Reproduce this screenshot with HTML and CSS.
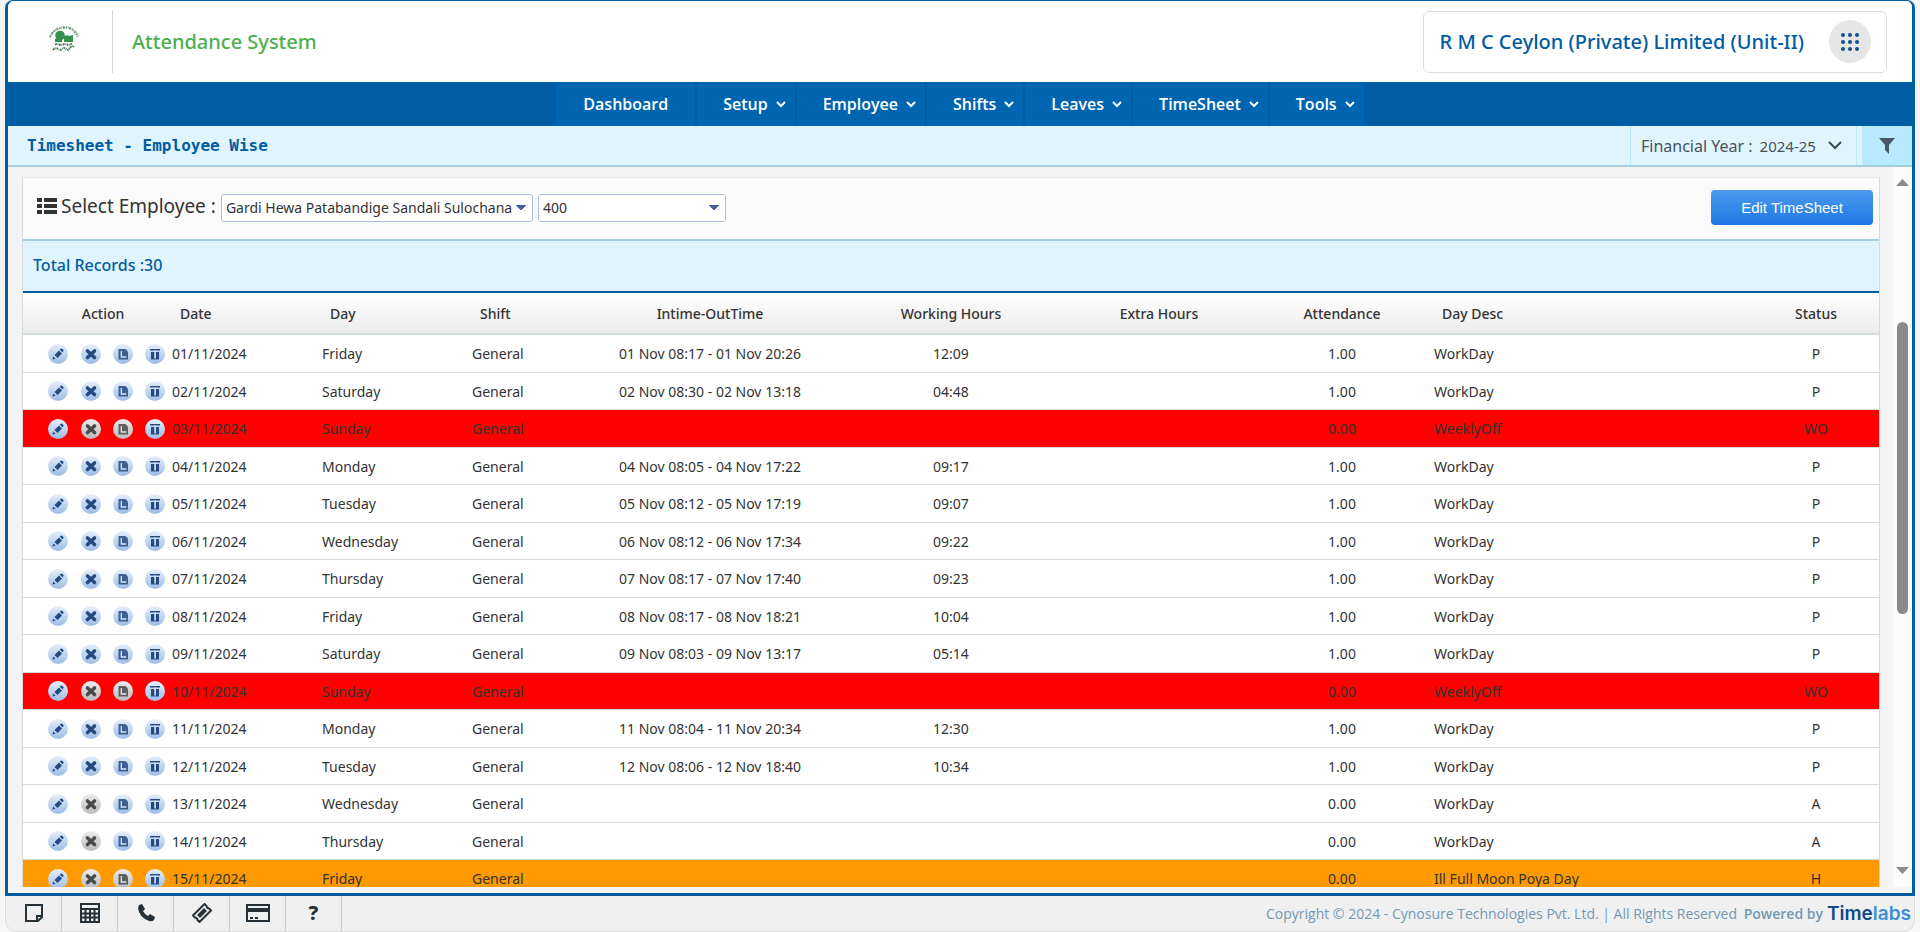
FILE: index.html
```html
<!DOCTYPE html>
<html lang="en">
<head>
<meta charset="utf-8">
<title>Timesheet - Employee Wise</title>
<link rel="stylesheet" href="styles.css">
</head>
<body>
<svg class="defs" aria-hidden="true">
  <defs>
    <linearGradient id="blue" x1="0" y1="0" x2="0" y2="1"><stop offset="0" stop-color="#e6effa"/><stop offset="1" stop-color="#9dbce6"/></linearGradient>
    <linearGradient id="gray" x1="0" y1="0" x2="0" y2="1"><stop offset="0" stop-color="#ececec"/><stop offset="1" stop-color="#bababa"/></linearGradient>
    <g id="pencil"><path d="M4.500 15.500l.8-3 2.200 2.200zM6.500 11l4.500-4.500 3 3-4.500 4.500zM11.800 5.700l1-1q.8-.6 1.600.2l.8.8q.8.8.2 1.600l-1 1z"/></g>
    <g id="cross"><path d="M6.500 7l7 6.500M13.500 7l-7 6.500" fill="none" stroke="currentColor" stroke-width="3.600" stroke-linecap="round"/></g>
    <g id="log"><path d="M5.500 5h6q3.500.5 3.500 4.500V15.500H5.500z" opacity=".85"/><path d="M8.300 7v6h5" fill="none" stroke="#dbe7f7" stroke-width="1.300"/></g>
    <g id="trash"><path d="M5 5h10v1.500H5zM6 8h8v7.500H6z"/><path d="M9.300 6.500h1.600v8H9.300z" fill="#dbe7f7"/></g>
  </defs>
</svg>
<div class="frame">
  <header class="top">
    <svg class="logo" viewBox="0 0 32 30" role="img" aria-label="Company logo">
      <path d="M2 14Q6 5 16 4.500T30 14" fill="none" stroke="#6c957a" stroke-width="2.400" stroke-dasharray="1.500 .8 .7 .6 2 .9"/>
      <circle cx="12" cy="12.500" r="4.800" fill="#34914a"/><path d="M7 16l7-1v4H7zM16 13l3-.8 2 .8 4-1v7h-9z" fill="#34914a"/>
      <path d="M7 21.500q2-1 4 0t4 0 4 0 5-1M5 27q3-3 5-1t4 0 4 0 4-1 4-1" fill="none" stroke="#4b7a59" stroke-width="2" stroke-dasharray="1.800 .7 .8 .6"/>
    </svg>
    <h1 class="app-name">Attendance System</h1>
    <div class="company">
      <span>R M C Ceylon (Private) Limited (Unit-II)</span>
      <button class="apps" aria-label="Applications"><svg viewBox="0 0 18 18"><g fill="#124f93"><circle cx="2" cy="2" r="2"/><circle cx="9" cy="2" r="2"/><circle cx="16" cy="2" r="2"/><circle cx="2" cy="9" r="2"/><circle cx="9" cy="9" r="2"/><circle cx="16" cy="9" r="2"/><circle cx="2" cy="16" r="2"/><circle cx="9" cy="16" r="2"/><circle cx="16" cy="16" r="2"/></g></svg></button>
    </div>
  </header>
  <nav class="nav" id="nav"></nav>
  <div class="subbar">
    <h2 class="page-name">Timesheet - Employee Wise</h2>
    <label class="year">Financial Year :
      <select class="year-select"><option>2024-25</option></select>
      <svg class="year-chevron" viewBox="0 0 14 9"><path d="M1 1l6 6 6-6"/></svg>
    </label>
    <button class="filter" aria-label="Filter"><svg viewBox="0 0 16 16"><path d="M0 0h16l-6 7v9l-4-4V7z"/></svg></button>
  </div>
  <div class="viewport">
    <main class="card">
      <form class="picker">
        <svg class="list" viewBox="0 0 20 16"><path d="M0 0h5v4H0zM7 0h13v4H7zM0 6h5v4H0zM7 6h13v4H7zM0 12h5v4H0zM7 12h13v4H7z"/></svg>
        <label class="picker-label" for="employee">Select Employee :</label>
        <select class="combo combo-wide" id="employee"><option>Gardi Hewa Patabandige Sandali Sulochana</option></select>
        <select class="combo" aria-label="Code"><option>400</option></select>
        <button type="button" class="edit">Edit TimeSheet</button>
      </form>
      <p class="total">Total Records :30</p>
      <table class="sheet">
        <colgroup><col class="c-action"><col class="c-date"><col class="c-date"><col class="c-shift"><col class="c-time"><col class="c-work"><col class="c-extra"><col class="c-att"><col class="c-desc"><col class="c-status"></colgroup>
        <thead><tr><th class="mid action">Action</th><th>Date</th><th>Day</th><th>Shift</th><th class="mid">Intime-OutTime</th><th class="mid">Working Hours</th><th class="mid">Extra Hours</th><th class="mid">Attendance</th><th>Day Desc</th><th class="mid">Status</th></tr></thead>
        <tbody id="rows"></tbody>
      </table>
    </main>
    <div class="scrollbar" aria-hidden="true">
      <svg class="arrow" viewBox="0 0 13 7"><path d="M0 7l6.500-7L13 7z"/></svg>
      <div class="track"><div class="thumb"></div></div>
      <svg class="arrow" viewBox="0 0 13 7"><path d="M0 0l6.500 7L13 0z"/></svg>
    </div>
  </div>
</div>
<footer class="footer">
  <button class="tool" aria-label="Notes"><svg viewBox="0 0 20 20"><path d="M2 2h16v12l-4 4H2zM18 13h-5v5" class="line"/></svg></button>
  <button class="tool" aria-label="Calculator"><svg viewBox="0 0 20 20"><path d="M1 1h18v18H1zM1 6h18M1 10.500h18M1 14.500h18M5.500 6v13M10 6v13M14.500 6v13" class="line"/></svg></button>
  <button class="tool" aria-label="Phone"><svg viewBox="0 0 20 20"><path d="M3 2l3-1 3 5-2 2q2 4 5 5l2-2 5 3-1 3q-2 2-5 1Q3 14 2 5z"/></svg></button>
  <button class="tool" aria-label="Tickets"><svg viewBox="0 0 20 20"><path d="M12.500 1l2 2q0 2 2.500 2.500l2 2L7.500 19l-2-2q0-2-2.500-2.500l-2-2z" class="line"/><path d="M12 5l3 3-7 7-3-3z"/></svg></button>
  <button class="tool" aria-label="Billing"><svg viewBox="0 0 24 20"><path d="M1 2h22v16H1zM4 15h3M9 15h3" class="line"/><path d="M1 5h22v4H1z"/></svg></button>
  <button class="tool help" aria-label="Help">?</button>
  <p class="copy">Copyright © 2024 - Cynosure Technologies Pvt. Ltd. | All Rights Reserved <b>Powered by</b></p>
  <a class="brand" href="#">Time<span>labs</span></a>
</footer>
<script src="app.js"></script>
</body>
</html>
```
FILE: styles.css
```css
* { box-sizing: border-box; }
body {
  margin: 0;
  height: 100vh;
  padding: 0 5px;
  display: flex;
  flex-direction: column;
  overflow: hidden;
  background: #f6f6f6;
  color: #333;
  font: 14px "Noto Sans", "Open Sans", sans-serif;
}
h1, h2, p { margin: 0; }
button { font: inherit; border: 0; padding: 0; background: none; cursor: pointer; }
select { font: inherit; color: inherit; appearance: none; }
svg { display: block; }
.defs { position: absolute; width: 0; height: 0; }
.frame {
  flex: 1;
  min-height: 0;
  display: flex;
  flex-direction: column;
  border: 3px solid #005ca3;
  border-top-width: 1px;
  border-radius: 8px 8px 0 0;
  overflow: hidden;
}

.top { height: 81px; flex: none; display: flex; align-items: center; padding: 0 25px 0 40px; background: #fff; }
.logo { width: 32px; height: 30px; margin-bottom: 8px; }
.app-name {
  flex: 1;
  height: 63px;
  margin-left: 32px;
  padding-left: 19px;
  border-left: 1px solid #d5d8da;
  font-size: 20px;
  font-weight: 500;
  line-height: 63px;
  color: #4caf50;
}
.company {
  display: flex;
  align-items: center;
  gap: 25px;
  height: 62px;
  padding: 0 15px 0 16px;
  border: 1px solid #d9dcde;
  border-radius: 6px;
  font-size: 20px;
  font-weight: 500;
  color: #005ca3;
}
.apps { width: 42px; height: 43px; border-radius: 50%; background: #e6e6e6; display: grid; place-items: center; }
.apps svg { width: 18px; height: 18px; }

.nav { height: 44px; flex: none; display: flex; justify-content: center; background: #005ca3; }
.nav a {
  display: flex;
  align-items: center;
  gap: 8px;
  padding: 0 9px 0 26px;
  border-right: 2px solid #005ca3;
  background: #0065b0;
  color: #fff;
  font: 600 16px/20px "Open Sans", sans-serif;
  text-decoration: none;
}
.nav a:last-child { border-right: 0; }
.nav .plain { padding: 0 27px; }
.nav svg { width: 10px; height: 8px; fill: none; stroke: #fff; stroke-width: 2; }

.subbar { height: 41px; flex: none; display: flex; align-items: stretch; background: #e0f4fe; border-bottom: 2px solid #a5cde0; }
.page-name { flex: 1; padding-left: 19px; font: bold 16px/39px "DejaVu Sans Mono", monospace; color: #005ca3; }
.year {
  display: flex;
  align-items: center;
  width: 227px;
  margin-right: 5px;
  padding: 0 14px 0 10px;
  border: 1px solid #b9e9ff;
  border-width: 0 1px;
  font-size: 16px;
  color: #47535b;
}
.year-select { flex: 1; border: 0; padding: 0 0 0 7px; background: none; font-size: 15px; }
.year-chevron { width: 14px; height: 9px; fill: none; stroke: #3b4a54; stroke-width: 2; }
.filter { width: 50px; background: #b9e9ff; display: grid; place-items: center; }
.filter svg { width: 16px; height: 16px; fill: #455a64; }

.viewport { flex: 1; min-height: 0; margin-bottom: 6px; display: flex; overflow: hidden; background: #f3f3f3; }
.card { flex: 1; align-self: flex-start; margin: 10px 13px 0 14px; border: 1px solid #d2dbe0; border-top: 1px solid #e6e9ea; background: #fff; }
.picker { display: flex; align-items: center; height: 63px; padding: 0 6px 2px 14px; background: #fafafa; border-bottom: 2px solid #a5cde0; }
.list { width: 20px; height: 16px; margin: 0 4px 4px 0; fill: #333; }
.picker-label { margin: 0 5px 4px 0; font-size: 19px; }
.combo {
  width: 188px;
  height: 28px;
  margin-right: 5px;
  padding: 0 20px 0 4px;
  border: 1px solid #a8bfe3;
  border-radius: 3px;
  background: linear-gradient(to bottom left, #4b5ea5 50%, transparent 50%) no-repeat right 11px center / 5px 6px, linear-gradient(to bottom right, #4b5ea5 50%, transparent 50%) no-repeat right 6px center / 5px 6px, #fff;
}
.combo-wide { width: 312px; }
.edit { width: 162px; height: 35px; margin-left: auto; border-radius: 4px; background: linear-gradient(#4a9aec, #1f78e6); color: #fff; font: 15px "Liberation Sans", sans-serif; }
.total { height: 52px; padding-left: 10px; border-bottom: 2px solid #005ca3; background: #e0f4fe; font-size: 16px; font-weight: 500; line-height: 48px; color: #005ca3; }

.sheet { width: 100%; table-layout: fixed; border-collapse: separate; border-spacing: 0; }
.c-action { width: 144px; }
.c-date { width: 150px; }
.c-shift { width: 114px; }
.c-time { width: 258px; }
.c-work { width: 224px; }
.c-extra { width: 192px; }
.c-att { width: 174px; }
.c-desc { width: 324px; }
.c-status { width: 126px; }
.sheet th, .sheet td { padding: 0 0 0 5px; text-align: left; border-bottom: 1px solid #d5dadc; white-space: nowrap; }
.sheet th { height: 42px; padding-left: 13px; border-bottom: 2px solid #d3dbdd; font-weight: 500; color: #333; background: linear-gradient(#fff, #ececec); }
.sheet .mid { padding: 0; text-align: center; }
.sheet .action { padding-left: 16px; }
.sheet tbody tr { height: 37px; }
.sheet tbody tr:nth-child(odd) { height: 38px; }
.off { background: #f00; }
.holiday { background: #f90; }
.actions { display: flex; gap: 12px; padding-left: 20px; }
.actions button { width: 20px; height: 20px; color: #244a82; }
.actions button:first-child { margin-right: 1px; }
.actions button.disabled { color: #4a4a4a; }
.actions svg { width: 20px; height: 20px; fill: currentColor; }

.scrollbar { width: 19px; padding: 12px 0 13px; display: flex; flex-direction: column; align-items: center; background: #fcfcfc; }
.arrow { width: 13px; height: 7px; fill: #8b8b8b; }
.track { flex: 1; padding-top: 136px; }
.thumb { width: 11px; height: 292px; border-radius: 6px; background: #8b8b8b; }

.footer { height: 36px; flex: none; display: flex; align-items: center; padding-right: 3px; background: #f0f0f0; border: 1px solid #ddd; border-top: 0; border-radius: 0 0 12px 12px; color: #7398b3; }
.tool { width: 56px; height: 35px; padding-bottom: 2px; display: grid; place-items: center; border-right: 1px solid #c0c8ca; color: #263238; }
.tool svg { width: 20px; height: 20px; fill: currentColor; }
.tool svg[viewBox="0 0 24 20"] { width: 24px; }
.tool .line { fill: none; stroke: currentColor; stroke-width: 2; }
.help { font-size: 20px; font-weight: 800; }
.copy { margin-left: auto; font-family: "Open Sans", sans-serif; }
.copy b { margin-left: 3px; font-weight: 600; }
.brand { margin-left: 4px; font: 600 19px Inter, sans-serif; color: #0f4c8c; text-decoration: none; }
.brand span { color: #3a8fd6; }
```
FILE: app.js
```js
document.getElementById('nav').innerHTML = ['Dashboard', 'Setup', 'Employee', 'Shifts', 'Leaves', 'TimeSheet', 'Tools']
  .map((name, i) => i === 0
    ? `<a class="plain" href="#">${name}</a>`
    : `<a href="#">${name}<svg viewBox="0 0 10 8"><path d="M1 2l4 4 4-4"/></svg></a>`)
  .join('');

const days = ['Friday', 'Saturday', 'Sunday', 'Monday', 'Tuesday', 'Wednesday', 'Thursday'];
const punches = {
  1: ['08:17', '20:26', '12:09'], 2: ['08:30', '13:18', '04:48'], 4: ['08:05', '17:22', '09:17'],
  5: ['08:12', '17:19', '09:07'], 6: ['08:12', '17:34', '09:22'], 7: ['08:17', '17:40', '09:23'],
  8: ['08:17', '18:21', '10:04'], 9: ['08:03', '13:17', '05:14'], 11: ['08:04', '20:34', '12:30'],
  12: ['08:06', '18:40', '10:34']
};
const icon = (id, label, off) =>
  `<button class="${off ? 'disabled' : ''}" aria-label="${label}"><svg viewBox="0 0 20 20"><circle cx="10" cy="10" r="10" fill="url(#${off ? 'gray' : 'blue'})"/><use href="#${id}"/></svg></button>`;

let html = '';
for (let n = 1; n <= 15; n++) {
  const d = String(n).padStart(2, '0');
  const p = punches[n];
  const sunday = n % 7 === 3;
  const holiday = n === 15;
  const desc = sunday ? 'WeeklyOff' : holiday ? 'Ill Full Moon Poya Day' : 'WorkDay';
  const status = sunday ? 'WO' : holiday ? 'H' : p ? 'P' : 'A';
  html += `<tr class="${sunday ? 'off' : holiday ? 'holiday' : ''}">
    <td><div class="actions">${icon('pencil', 'Edit')}${icon('cross', 'Cancel', !p)}${icon('log', 'Log', sunday || holiday)}${icon('trash', 'Delete')}</div></td>
    <td>${d}/11/2024</td><td>${days[(n - 1) % 7]}</td><td>General</td>
    <td class="mid">${p ? `${d} Nov ${p[0]} - ${d} Nov ${p[1]}` : ''}</td><td class="mid">${p ? p[2] : ''}</td><td></td>
    <td class="mid">${p ? '1.00' : '0.00'}</td><td>${desc}</td><td class="mid">${status}</td></tr>`;
}
document.getElementById('rows').innerHTML = html;
```
